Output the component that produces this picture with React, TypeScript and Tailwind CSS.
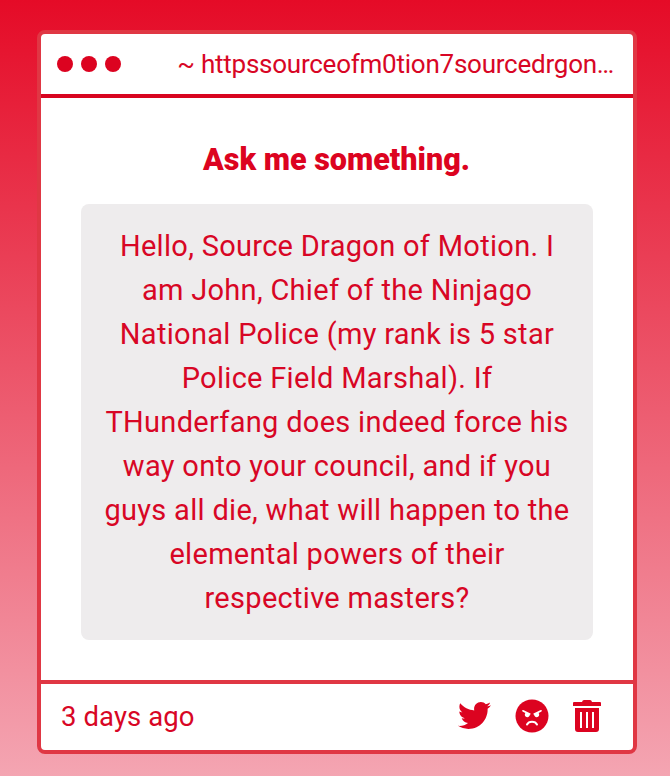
import { FaTwitter } from 'react-icons/fa';

const LINES = [
  'Hello, Source Dragon of Motion. I',
  'am John, Chief of the Ninjago',
  'National Police (my rank is 5 star',
  'Police Field Marshal). If',
  'THunderfang does indeed force his',
  'way onto your council, and if you',
  'guys all die, what will happen to the',
  'elemental powers of their',
  'respective masters?',
];

function AngryIcon() {
  return (
    <svg width="34" height="34" viewBox="0 0 34 34">
      <circle cx="17" cy="17" r="16.5" fill="currentColor" />
      <g fill="#fff">
        <path d="M7.2 11.2q.8-.6 1.600 0l6.700 3.200q.8.8-.5 1.200c-.2 1.500-1.200 2.600-2.600 2.600s-2.600-1.100-2.600-2.500c0-.8.2-1.300.6-1.700l-2.600-1.200q-.9-.7-.6-1.600z" />
        <path d="M26.800 11.200q-.8-.6-1.600 0l-6.700 3.200q-.8.8.5 1.200c.2 1.500 1.200 2.600 2.600 2.600s2.600-1.100 2.600-2.500c0-.8-.2-1.300-.6-1.700l2.600-1.200q.9-.7.6-1.600z" />
      </g>
      <path d="M12 25.500c1.800-3.800 8.200-3.800 10 0" stroke="#fff" strokeWidth="2" strokeLinecap="round" fill="none" />
    </svg>
  );
}

function TrashIcon() {
  return (
    <svg width="28" height="32" viewBox="0 0 28 32" fill="currentColor">
      <path d="M1 2h8q.5-2 2-2h6q1.500 0 2 2h8q1 0 1 1v3H0V3q0-1 1-1z" />
      <path fillRule="evenodd" d="M2 8h24v21q0 3-3 3H5q-3 0-3-3zM7 12v16h2V12zm6 0v16h2V12zm6 0v16h2V12z" />
    </svg>
  );
}

export default function App() {
  return (
    <div className="h-[776px] w-[670px] bg-linear-to-b/srgb from-[#e50b27] to-[#f4a5b2] px-[37px] pt-[30px] font-[Roboto,sans-serif] text-[#d80625]">
      <div className="flex h-[724px] w-[600px] flex-col rounded-lg border-4 border-[#e03744] bg-white">
        <header className="flex h-16 items-center justify-between border-b-4 border-[#d80420] pr-[19px] pl-4">
          <div className="flex gap-2">
            <span className="size-4 rounded-full bg-[#dc0320]" />
            <span className="size-4 rounded-full bg-[#dc0320]" />
            <span className="size-4 rounded-full bg-[#dc0320]" />
          </div>
          <span className="text-[26px] tracking-[-0.24px] whitespace-nowrap">~ httpssourceofm0tion7sourcedrgon…</span>
        </header>
        <main className="flex-1 px-10 pt-10">
          <h1 className="-ml-px text-center text-[30.5px] leading-[44px] font-black text-[#dc0320]">Ask me something.</h1>
          <div className="mt-[22px] h-[436px] rounded-lg bg-[#eeeced] pt-5 text-center text-[29px] leading-[44px] tracking-[0.3px] whitespace-nowrap">
            {LINES.map((line) => (
              <p key={line}>{line}</p>
            ))}
          </div>
        </main>
        <footer className="flex h-[70px] items-center justify-between border-t-4 border-[#e03744] pr-8 pl-5">
          <span className="text-[27.5px] tracking-[0.1px]">3 days ago</span>
          <div className="flex items-center gap-6 pb-0.5 text-[#dc0320]">
            <FaTwitter size={33} className="-mt-0.5" />
            <AngryIcon />
            <TrashIcon />
          </div>
        </footer>
      </div>
    </div>
  );
}
